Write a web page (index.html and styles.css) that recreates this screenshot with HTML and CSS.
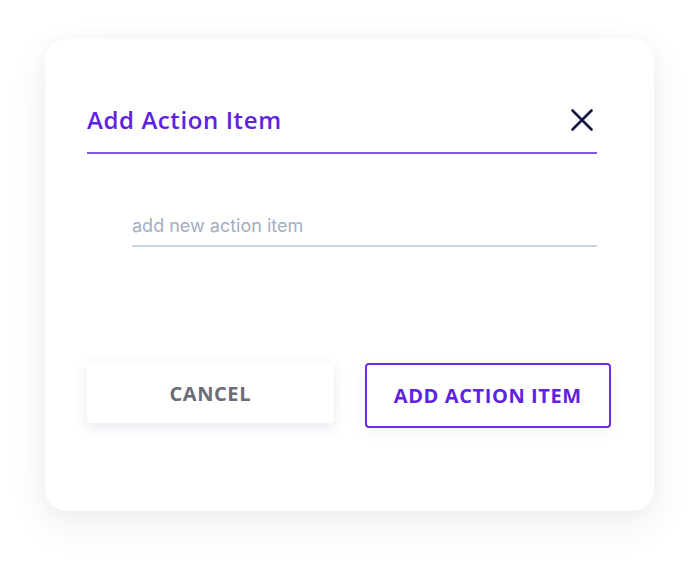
FILE: index.html
```html
<!DOCTYPE html>
<html lang="en">
<head>
    <meta charset="UTF-8">
    <meta name="viewport" content="width=device-width, initial-scale=1.0">
    <title>Add Action Item</title>
    <link rel="stylesheet" href="styles.css">
</head>
<body>
    <div class="modal">
        <div class="modal-header">
            <h2 class="modal-title">Add Action Item</h2>
            <button type="button" class="close-button" aria-label="Close">
                <svg width="24" height="24" viewBox="0 0 24 24">
                    <path d="M2.5 2.5 L21.5 21.5 M21.5 2.5 L2.5 21.5" stroke="#15163d" stroke-width="2.6" stroke-linecap="round" fill="none"/>
                </svg>
            </button>
        </div>

        <div class="field">
            <input type="text" class="action-input" placeholder="add new action item">
        </div>

        <div class="actions">
            <button type="button" class="cancel-button">CANCEL</button>
            <button type="button" class="add-button">ADD ACTION ITEM</button>
        </div>
    </div>
</body>
</html>
```

FILE: styles.css
```css
html, body {
    height: 100%;
}

body {
    font-family: 'Open Sans', 'Liberation Sans', sans-serif;
    margin: 0;
    padding: 39px 46px 0 45px;
    box-sizing: border-box;
    background-color: #fff;
}

.modal {
    height: 472px;
    box-sizing: border-box;
    padding: 63px 43px 0 42px;
    background-color: #fff;
    border-radius: 22px;
    box-shadow: 0 14px 40px rgba(0, 0, 0, 0.07), 0 0 18px rgba(0, 0, 0, 0.03);
}

.modal-header {
    display: flex;
    justify-content: space-between;
    align-items: center;
    margin-right: 14px;
    padding-bottom: 14px;
    border-bottom: 2px solid #8357e8;
}

.modal-title {
    margin: 0;
    font-size: 24px;
    font-weight: 600;
    line-height: 36px;
    letter-spacing: 0.6px;
    color: #5f22e2;
}

.close-button {
    background: none;
    border: none;
    padding: 0;
    margin-right: 3px;
    width: 24px;
    height: 24px;
    cursor: pointer;
}

.field {
    margin: 61px 14px 0 45px;
}

.action-input {
    width: 100%;
    box-sizing: border-box;
    border: none;
    border-bottom: 2px solid #cbd5e1;
    padding: 0 0 9px;
    font-family: 'Inter', sans-serif;
    font-size: 18px;
    color: #334155;
    outline: none;
}

.action-input::placeholder {
    color: #a3aec2;
}

.actions {
    display: grid;
    grid-template-columns: 1fr 1fr;
    gap: 31px;
    align-items: start;
    margin-top: 116px;
}

.cancel-button,
.add-button {
    font-family: 'Open Sans', 'Liberation Sans', sans-serif;
    font-size: 20px;
    font-weight: 700;
    letter-spacing: 0.6px;
    background-color: #fff;
    border-radius: 4px;
    cursor: pointer;
}

.cancel-button {
    height: 60px;
    border: none;
    color: #6c6c78;
    box-shadow: 0 4px 14px rgba(80, 90, 130, 0.14);
}

.add-button {
    height: 65px;
    border: 2px solid #6a2ee3;
    color: #5f22e2;
    box-shadow: 0 4px 14px rgba(80, 90, 130, 0.08);
}
```
